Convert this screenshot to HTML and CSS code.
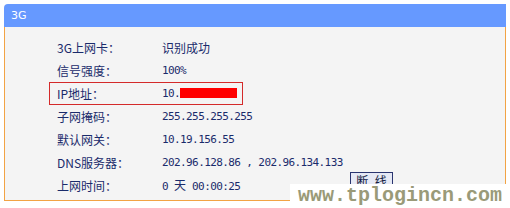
FILE: index.html
```html
<!DOCTYPE html>
<html lang="zh-CN">
<head>
<meta charset="utf-8">
<title>3G</title>
<link rel="stylesheet" href="styles.css">
</head>
<body>
<div class="panel">
  <div class="head">3G</div>
  <div class="body">
    <div class="row"><span class="lbl">3G上网卡：</span><span class="val cjk">识别成功</span></div>
    <div class="row"><span class="lbl">信号强度：</span><span class="val">100%</span></div>
    <div class="row hl"><span class="lbl">IP地址：</span><span class="val">10.<span class="redact"></span></span></div>
    <div class="row"><span class="lbl">子网掩码：</span><span class="val">255.255.255.255</span></div>
    <div class="row"><span class="lbl">默认网关：</span><span class="val">10.19.156.55</span></div>
    <div class="row"><span class="lbl">DNS服务器：</span><span class="val wide">202.96.128.86 , 202.96.134.133</span></div>
    <div class="row"><span class="lbl">上网时间：</span><span class="val">0 <span class="cjk">天</span> 00:00:25</span><button class="btn">断 线</button></div>
  </div>
</div>
<div class="mark">www.tplogincn.com</div>
</body>
</html>
```

FILE: styles.css
```css
html, body {
  margin: 0;
  padding: 0;
  background: #ffffff;
}
body {
  width: 510px;
  height: 208px;
  position: relative;
  overflow: hidden;
  padding: 4px 0 0 4px;
  box-sizing: border-box;
  font-family: "Noto Sans CJK SC", sans-serif;
  font-size: 12px;
  color: #1a2b6b;
}
.panel {
  width: 502px;
}
.head {
  height: 23px;
  line-height: 23px;
  background: #6699ff;
  color: #ffffff;
  padding-left: 7px;
  border-radius: 4px 0 0 0;
  font-family: "DejaVu Sans", sans-serif;
  font-size: 11px;
}
.body {
  background: #f4f4f4;
  border: 1px solid #f2a344;
  border-top: none;
  padding: 9px 0 3px 52px;
}
.row {
  display: grid;
  grid-template-columns: 105px 188px auto;
  align-items: center;
  height: 23px;
  position: relative;
}
.lbl {
  font-family: "Noto Sans CJK SC", sans-serif;
  font-size: 12px;
  white-space: nowrap;
  line-height: 14px;
}
.val {
  font-family: "DejaVu Sans Mono", "Noto Sans CJK SC", monospace;
  font-size: 11px;
  letter-spacing: -0.6px;
  white-space: pre;
  line-height: 14px;
}
.wide {
  grid-column: 2 / 4;
}
.cjk {
  font-family: "Noto Sans CJK SC", sans-serif;
  font-size: 12px;
  letter-spacing: 0;
}
.hl::before {
  content: "";
  position: absolute;
  left: -8px;
  top: 0;
  width: 194px;
  height: 23px;
  box-sizing: border-box;
  border: 1px solid #d42a2a;
}
.redact {
  display: inline-block;
  width: 57px;
  height: 10px;
  background: #ff0000;
  vertical-align: -1px;
}
.btn {
  align-self: start;
  justify-self: start;
  margin-top: -2px;
  width: 43px;
  height: 18px;
  padding: 0 0 0 2px;
  border: 1px solid #2a3570;
  background: #e6e9f5;
  color: #101840;
  font-family: "Noto Sans CJK SC", sans-serif;
  font-size: 12px;
  line-height: 16px;
  letter-spacing: 2px;
  white-space: pre;
}
.mark {
  position: absolute;
  right: 0;
  bottom: 0;
  width: 220px;
  height: 24px;
  background: #ffffff;
  padding-left: 8px;
  box-sizing: border-box;
  font-family: "Liberation Mono", monospace;
  font-size: 20px;
  font-weight: bold;
  line-height: 24px;
  color: #9a9a78;
  white-space: nowrap;
}
```
